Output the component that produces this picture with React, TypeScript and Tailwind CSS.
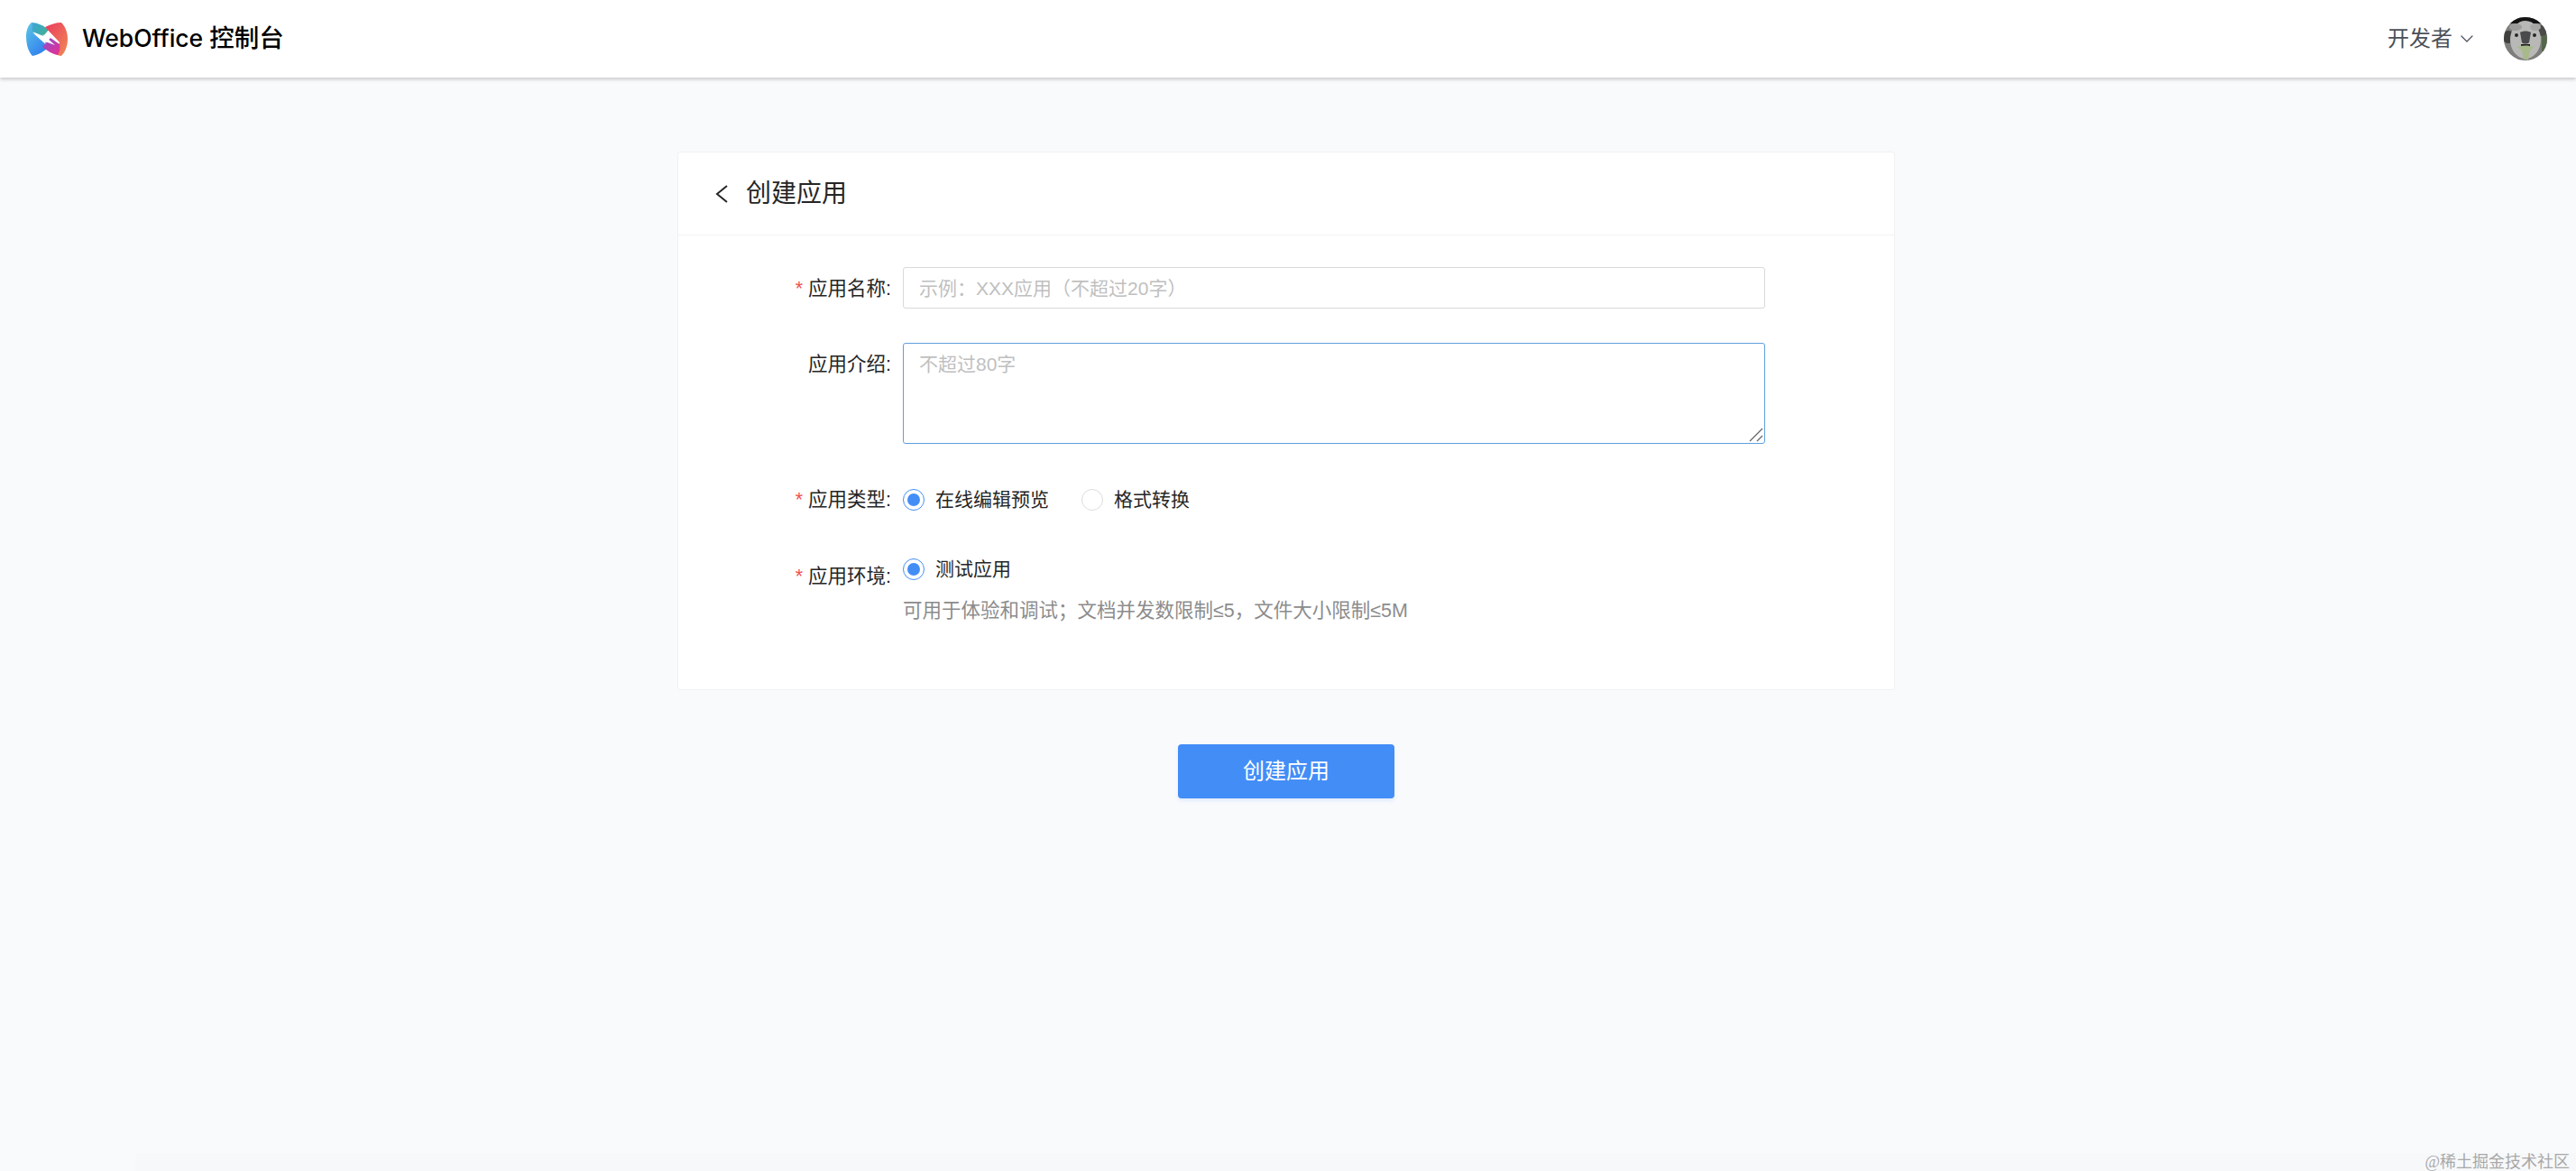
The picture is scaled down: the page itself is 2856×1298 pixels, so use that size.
import { ChevronDown } from 'lucide-react';
import type { ReactNode } from 'react';

function Logo() {
  return (
    <svg width="46" height="37" viewBox="0 0 46 37" className="shrink-0">
      <defs>
        <linearGradient id="blue" x1="0" y1="0.1" x2="0.7" y2="1">
          <stop offset="0" stopColor="#58c1e6" />
          <stop offset="1" stopColor="#2f7cf0" />
        </linearGradient>
        <linearGradient id="teal" x1="0" y1="0" x2="1" y2="0.6">
          <stop offset="0" stopColor="#3fa6dc" />
          <stop offset="1" stopColor="#3fae9a" />
        </linearGradient>
        <linearGradient id="red" x1="0" y1="0" x2="1" y2="1">
          <stop offset="0" stopColor="#ea3a5e" />
          <stop offset="1" stopColor="#f08a55" />
        </linearGradient>
        <linearGradient id="magenta" x1="0" y1="0" x2="1" y2="1">
          <stop offset="0" stopColor="#8a4fd0" />
          <stop offset="1" stopColor="#ea2f8e" />
        </linearGradient>
      </defs>
      <path d="M6 0C2 3 0 9 0 15C0 23 2 32 7 37C13 36 20 32 27 26L8 11Z" fill="url(#blue)" />
      <path d="M6 0C12 0 19 3 25 8L19 15L7 10Z" fill="url(#teal)" />
      <path d="M21 5C27 2 33 0 39 0C44 5 46 12 46 18C46 25 44 32 39 37C37 37 35 36 33 35L37 22Z" fill="url(#red)" />
      <path d="M18 27L27 17L37 24C38 29 37 33 35 36C29 35 23 31 18 27Z" fill="url(#magenta)" />
      <path d="M7 11L19 17L18.5 13L32 25L21 21L21.5 24Z" fill="#fff" />
    </svg>
  );
}

function Avatar() {
  return (
    <svg width="48" height="48" viewBox="0 0 48 48" className="shrink-0 rounded-full">
      <rect width="48" height="48" fill="#7d7d7b" />
      <rect width="48" height="7" fill="#141414" />
      <rect x="42" y="14" width="6" height="24" fill="#56664c" />
      <circle cx="5" cy="22" r="7" fill="#3f3f3d" />
      <circle cx="42" cy="15" r="6" fill="#4a4a48" />
      <ellipse cx="24" cy="25" rx="17" ry="21" fill="#b8b8b6" />
      <ellipse cx="13" cy="11" rx="7" ry="4" fill="#9c9c9a" />
      <ellipse cx="35" cy="11" rx="6" ry="4" fill="#a6a6a4" />
      <circle cx="14" cy="20" r="2" fill="#262625" />
      <circle cx="34" cy="20" r="2" fill="#262625" />
      <path d="M18 17C21 15 27 15 30 17L28 28C26 30 22 30 20 28Z" fill="#4a4a4d" />
      <path d="M19 30H29V33H19Z" fill="#1f1f1f" />
      <path d="M15 33C20 31 28 31 33 33L29 37L27 47H22L20 37Z" fill="#a8ba8b" />
    </svg>
  );
}

function Radio({ checked }: { checked?: boolean }) {
  return (
    <span
      className={`flex h-6 w-6 shrink-0 items-center justify-center rounded-full border bg-white ${
        checked ? 'border-[#438df7]' : 'border-[#dcdcdc]'
      }`}
    >
      {checked && <span className="h-3.5 w-3.5 rounded-full bg-[#438df7]" />}
    </span>
  );
}

function Row({ label, required, labelClass, className, children }: { label: string; required?: boolean; labelClass?: string; className?: string; children: ReactNode }) {
  return (
    <div className={`flex items-start ${className ?? ''}`}>
      <label className={`w-[236px] shrink-0 text-right text-[21.5px] text-[#262626] ${labelClass ?? ''}`}>
        {required && <span className="mr-[6px] text-[#f0524f]">*</span>}
        {label}:
      </label>
      <div className="ml-[13px] w-[956px]">{children}</div>
    </div>
  );
}

export default function App() {
  return (
    <div className="flex h-[1298px] flex-col overflow-hidden bg-[#f9fafc] font-['Liberation_Sans','Noto_Sans_CJK_SC',sans-serif]">
      {/* Header */}
      <header className="flex h-[86px] shrink-0 items-center justify-between bg-white pl-[29px] pr-[32px] shadow-[0_2px_4px_rgba(0,0,0,0.2)]">
        <div className="flex items-center gap-[16px]">
          <Logo />
          <span className="font-['Inter','Noto_Sans_CJK_SC',sans-serif] text-[26.5px] font-medium text-black">
            WebOffice <span className="text-[27.5px]">控制台</span>
          </span>
        </div>
        <div className="flex items-center">
          <span className="text-[24px] text-[#4b4f58]">开发者</span>
          <ChevronDown className="ml-[4px] h-6 w-6 text-[#4b4f58]" strokeWidth={1.2} />
          <div className="ml-[29px]">
            <Avatar />
          </div>
        </div>
      </header>

      {/* Main Content */}
      <main className="flex flex-1 flex-col items-center pr-[4px] pt-[82px]">
        <section className="h-[597px] w-[1350px] rounded-[3px] border border-[#f0f1f3] bg-white">
          <div className="flex h-[92px] items-center border-b border-[#f2f3f5] pl-[41px]">
            <svg width="14" height="20" viewBox="0 0 14 20" fill="none" stroke="#262626" strokeWidth="2">
              <path d="M13 1L2 10L13 19" />
            </svg>
            <h1 className="ml-[20px] text-[28px] text-[#262626]">创建应用</h1>
          </div>

          <div className="pt-[35px]">
            <Row label="应用名称" required labelClass="h-[46px] leading-[48px]">
              <input
                readOnly
                placeholder="示例：XXX应用（不超过20字）"
                className="h-[46px] w-full rounded-[3px] border border-[#d9d9d9] px-[17px] pt-[2px] text-[21px] outline-none placeholder:text-[#bfbfbf]"
              />
            </Row>
            <Row label="应用介绍" className="mt-[38px]" labelClass="leading-[48px]">
              <div className="relative">
                <textarea
                  readOnly
                  placeholder="不超过80字"
                  className="block h-[112px] w-full resize-none rounded-[3px] border border-[#5f9fdc] px-[17px] py-[9px] text-[21px] leading-[28px] outline-none placeholder:text-[#bfbfbf]"
                />
                <svg width="16" height="16" viewBox="0 0 16 16" fill="none" stroke="#666" strokeWidth="1.3" className="absolute bottom-[2px] right-[2px]">
                  <path d="M1 15L15 1M9 15L15 9" />
                </svg>
              </div>
            </Row>
            <Row label="应用类型" required className="mt-[50px]" labelClass="leading-[24px]">
              <div className="flex items-center text-[21px] leading-[24px] text-[#262626]">
                <Radio checked />
                <span className="ml-[12px]">在线编辑预览</span>
                <span className="ml-[36px]">
                  <Radio />
                </span>
                <span className="ml-[12px]">格式转换</span>
              </div>
            </Row>
            <Row label="应用环境" required className="mt-[53px]" labelClass="leading-[40px]">
              <div className="flex items-center text-[21px] leading-[24px] text-[#262626]">
                <Radio checked />
                <span className="ml-[12px]">测试应用</span>
              </div>
              <p className="mt-[20px] text-[21.5px] leading-[28px] text-[#8c8c8c]">可用于体验和调试；文档并发数限制≤5，文件大小限制≤5M</p>
            </Row>
          </div>
        </section>

        <button className="mt-[60px] h-[60px] w-[240px] rounded-[4px] bg-[#438df7] text-[24px] text-white shadow-[0_3px_4px_rgba(67,141,247,0.12)]">
          创建应用
        </button>
      </main>

      {/* Footer band with the watermark */}
      <footer className="ml-[150px] flex h-[20px] shrink-0 items-center justify-end bg-[#f7f8fa] pr-[7px]">
        <span className="font-['Liberation_Serif','Noto_Sans_CJK_SC',serif] text-[18px] leading-[20px] text-[#a8a8a8]">@稀土掘金技术社区</span>
      </footer>
    </div>
  );
}
